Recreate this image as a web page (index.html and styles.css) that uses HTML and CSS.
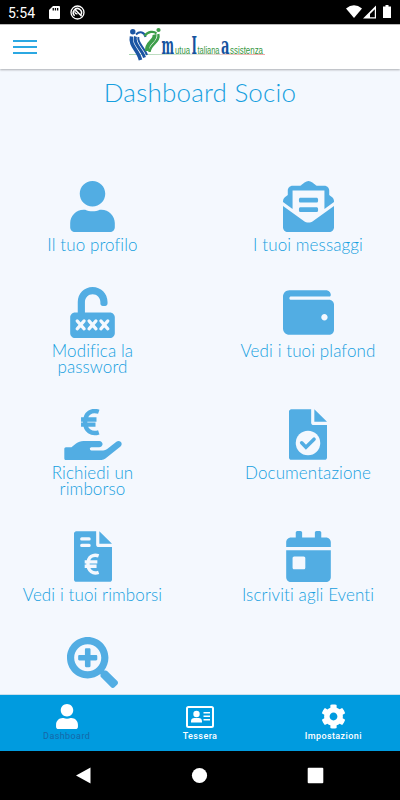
FILE: index.html
```
<!DOCTYPE html>
<html lang="it">
<head>
    <meta charset="UTF-8">
    <meta name="viewport" content="width=device-width, initial-scale=1.0">
    <title>Dashboard Socio</title>
    <link rel="stylesheet" href="styles.css">
</head>
<body>
    <div class="status-bar">
        <span class="time">5:54</span>
        <svg class="sd" width="11" height="13" viewBox="0 0 11 13"><path fill="#fff" fill-rule="evenodd" d="M4 0h6a1 1 0 0 1 1 1v11a1 1 0 0 1-1 1H1a1 1 0 0 1-1-1V4zM3.600 2v2.600h1.300V2zM5.800 2v2.600h1.300V2zM8 2v2.600h1.300V2z"/></svg>
        <svg width="15" height="15" viewBox="0 0 15 15" fill="none" stroke="#fff"><circle cx="7.500" cy="7.500" r="6.500" stroke-width="1.300"/><path d="M4.600 10.700A4.100 4.100 0 1 1 10.900 9.800M5.300 4.700l6.400 6.500" stroke-width="1.500"/><path d="M5 6.200a2 2 0 0 0 2.500 2.500" stroke-width="1.300"/></svg>
        <svg class="signals" width="46" height="14" viewBox="0 0 46 14"><path fill="#fff" d="M0 3.600Q8-3 16 3.600L8 13z"/><path fill="#fff" fill-rule="evenodd" d="M17 13.500L30 .5v13zM24 12.300h4.800V4.200L24 9z"/><path fill="#fff" d="M39.500 0h3v1.500H45V13h-8V1.500h2.500z"/></svg>
    </div>

    <header class="top-bar">
        <div class="menu"><span></span><span></span><span></span></div>
        <svg class="logo" width="160" height="42" viewBox="0 0 160 42">
            <defs>
                <linearGradient id="rule" gradientUnits="userSpaceOnUse" x1="1" y1="0" x2="137" y2="0"><stop offset="0" stop-color="#a5d3ad"/><stop offset=".45" stop-color="#dfe9df"/><stop offset="1" stop-color="#f3a5a5"/></linearGradient>
            </defs>
            <path d="M1 27.500h136" stroke="url(#rule)"/>
            <circle cx="4.800" cy="4.800" r="2.700" fill="#1b55a3"/>
            <circle cx="30.500" cy="3" r="2.100" fill="#3d9e4a"/>
            <g fill="none" stroke="#1b55a3">
                <path d="M3.500 9.500C1.500 19 10 23 12.500 33" stroke-width="3.600"/>
                <path d="M7.500 9.500C5 17 14 22 16.500 30.500" stroke-width="3"/>
                <path d="M10.500 10C8.500 15 16.500 21 19 28" stroke-width="2"/>
                <path d="M8 7.500C12 3.500 16.500 5.500 17.500 10" stroke-width="2"/>
            </g>
            <g fill="none" stroke="#3d9e4a">
                <path d="M16.500 9C20 4 26 4 28.500 6.500" stroke-width="2.200"/>
                <path d="M26.500 7.500C28 14 18 15 19 24" stroke-width="4"/>
                <path d="M30.300 7C32.500 15 22 17 21.500 25" stroke-width="2.400"/>
            </g>
            <g class="logo-big">
                <text x="33.500" y="27" textLength="12.500" lengthAdjust="spacingAndGlyphs">m</text>
                <text x="63.500" y="27" textLength="5.500" lengthAdjust="spacingAndGlyphs">I</text>
                <text x="93" y="27" textLength="8.500" lengthAdjust="spacingAndGlyphs">a</text>
            </g>
            <g class="logo-small">
                <text x="47" y="27" textLength="15" lengthAdjust="spacingAndGlyphs">utua</text>
                <text x="69.500" y="27" textLength="22" lengthAdjust="spacingAndGlyphs">taliana</text>
                <text x="102" y="27" textLength="33" lengthAdjust="spacingAndGlyphs">ssistenza</text>
            </g>
        </svg>
    </header>

    <main class="content">
        <h1>Dashboard Socio</h1>
        <div class="grid">
            <a class="item">
                <svg width="45" height="51" viewBox="0 0 448 512"><path d="M224 256c70.700 0 128-57.300 128-128S294.700 0 224 0 96 57.300 96 128s57.300 128 128 128zm89.600 32h-16.700c-22.200 10.200-46.900 16-72.900 16s-50.600-5.800-72.900-16h-16.700C60.200 288 0 348.200 0 422.400V464c0 26.500 21.500 48 48 48h352c26.500 0 48-21.500 48-48v-41.600c0-74.200-60.200-134.400-134.400-134.400z"/></svg>
                <span>Il tuo profilo</span>
            </a>
            <a class="item">
                <svg width="51" height="51" viewBox="0 0 512 512"><path d="M176 216h160c8.840 0 16-7.160 16-16v-16c0-8.840-7.160-16-16-16H176c-8.840 0-16 7.160-16 16v16c0 8.840 7.160 16 16 16zm-16 80c0 8.840 7.160 16 16 16h160c8.840 0 16-7.160 16-16v-16c0-8.840-7.160-16-16-16H176c-8.840 0-16 7.160-16 16v16zm96 121.130c-16.420 0-32.840-5.060-46.860-15.190L0 250.860V464c0 26.510 21.490 48 48 48h416c26.510 0 48-21.490 48-48V250.860L302.860 401.940c-14.020 10.120-30.440 15.190-46.860 15.190zm237.610-254.180c-8.850-6.940-17.240-13.470-29.610-22.810V96c0-26.510-21.490-48-48-48h-77.550c-3.040-2.200-5.870-4.260-9.040-6.560C312.600 29.170 279.200-.35 256 0c-23.200-.35-56.590 29.170-73.410 41.440-3.170 2.300-6 4.360-9.040 6.560H96c-26.510 0-48 21.490-48 48v44.140c-12.370 9.330-20.760 15.870-29.610 22.810A48 48 0 0 0 0 200.720v10.650l96 69.350V96h320v184.720l96-69.350v-10.650c0-14.740-6.780-28.670-18.390-37.770z"/></svg>
                <span>I tuoi messaggi</span>
            </a>
            <a class="item">
                <svg width="45" height="51" viewBox="0 0 448 512"><path d="M48 256h28V150C76 67 142 0 225 0s150 67 150 150v16c0 13-11 24-24 24h-24c-13 0-24-11-24-24v-16c0-43-35-78-78-78s-77 35-77 78v106h252c26 0 48 22 48 48v160c0 26-22 48-48 48H48c-26 0-48-22-48-48V304c0-26 22-48 48-48z"/><path class="cut" stroke-width="32" d="M70 340l70 80M140 340l-70 80M189 340l70 80M259 340l-70 80M308 340l70 80M378 340l-70 80"/></svg>
                <span>Modifica la<br>password</span>
            </a>
            <a class="item">
                <svg width="51" height="51" viewBox="0 0 512 512"><path d="M461.200 128H80c-8.840 0-16-7.160-16-16s7.160-16 16-16h384c8.840 0 16-7.160 16-16 0-26.510-21.490-48-48-48H64C28.650 32 0 60.650 0 96v320c0 35.350 28.650 64 64 64h397.200c28.020 0 50.800-21.530 50.800-48V176c0-26.470-22.780-48-50.800-48zM416 336c-17.670 0-32-14.330-32-32s14.330-32 32-32 32 14.330 32 32-14.330 32-32 32z"/></svg>
                <span>Vedi i tuoi plafond</span>
            </a>
            <a class="item">
                <svg width="58" height="51" viewBox="0 0 576 512"><path class="line" stroke-width="44" d="M346 28C275 4 209 40 209 130s66 128 137 104M168 105h155M168 157h145"/><path d="M565.300 328.100c-11.800-10.700-30.200-10-42.600 0L430.300 402c-11.300 9.100-25.400 14-40 14H272c-8.800 0-16-7.200-16-16s7.200-16 16-16h78.300c15.900 0 30.700-10.900 33.300-26.600 3.300-20-12.100-37.400-31.600-37.400H192c-27 0-53.100 9.300-74.100 26.300L71.400 384H16c-8.800 0-16 7.200-16 16v96c0 8.800 7.200 16 16 16h356.800c14.500 0 28.600-4.900 40-14L564 377c15.200-12.100 16.400-35.300 1.300-48.900z"/></svg>
                <span>Richiedi un<br>rimborso</span>
            </a>
            <a class="item">
                <svg width="38" height="51" viewBox="0 0 384 512"><path d="M224 136V0H24C10.700 0 0 10.700 0 24v464c0 13.300 10.700 24 24 24h336c13.300 0 24-10.700 24-24V160H248c-13.200 0-24-10.800-24-24zM256 0v128h128z"/><circle class="hole" cx="192" cy="342" r="124"/><path class="line" stroke-width="36" stroke-linecap="round" d="M128 340l43 44 82-80"/></svg>
                <span>Documentazione</span>
            </a>
            <a class="item">
                <svg width="38" height="51" viewBox="0 0 384 512"><path d="M224 136V0H24C10.700 0 0 10.700 0 24v464c0 13.300 10.700 24 24 24h336c13.300 0 24-10.700 24-24V160H248c-13.200 0-24-10.800-24-24zM256 0v128h128z"/><path class="cut" stroke-width="32" d="M78 78h75M78 144h75"/><path class="cut butt" stroke-width="34" d="M249 250C194 229 141 259 141 333s53 103 108 83M108 310h128M108 354h120"/></svg>
                <span>Vedi i tuoi rimborsi</span>
            </a>
            <a class="item">
                <svg width="45" height="51" viewBox="0 0 448 512"><path d="M0 464c0 26.500 21.500 48 48 48h352c26.500 0 48-21.500 48-48V192H0v272zm64-192c0-8.800 7.200-16 16-16h96c8.800 0 16 7.200 16 16v96c0 8.800-7.200 16-16 16H80c-8.800 0-16-7.200-16-16v-96zM400 64h-48V16c0-8.800-7.200-16-16-16h-32c-8.800 0-16 7.200-16 16v48H160V16c0-8.800-7.200-16-16-16h-32c-8.800 0-16 7.200-16 16v48H48C21.500 64 0 85.500 0 112v48h448v-48c0-26.500-21.500-48-48-48z"/></svg>
                <span>Iscriviti agli Eventi</span>
            </a>
            <a class="item">
                <svg width="51" height="51" viewBox="0 0 512 512"><path d="M304 192v32c0 6.600-5.400 12-12 12h-56v56c0 6.600-5.400 12-12 12h-32c-6.600 0-12-5.400-12-12v-56h-56c-6.600 0-12-5.400-12-12v-32c0-6.600 5.400-12 12-12h56v-56c0-6.600 5.400-12 12-12h32c6.600 0 12 5.400 12 12v56h56c6.600 0 12 5.400 12 12zm201 284.700L476.700 505c-9.400 9.400-24.600 9.400-33.900 0L343 405.300c-4.500-4.500-7-10.600-7-17V372c-35.300 27.600-79.700 44-128 44C93.100 416 0 322.900 0 208S93.100 0 208 0s208 93.100 208 208c0 48.300-16.400 92.700-44 128h16.300c6.400 0 12.500 2.500 17 7l99.700 99.700c9.300 9.400 9.300 24.600 0 34zM344 208c0-75.200-60.800-136-136-136S72 132.800 72 208s60.800 136 136 136 136-60.800 136-136z"/></svg>
            </a>
        </div>
    </main>

    <nav class="tab-bar">
        <a class="tab active">
            <svg width="22" height="25" viewBox="0 0 448 512"><path d="M224 256c70.700 0 128-57.300 128-128S294.700 0 224 0 96 57.300 96 128s57.300 128 128 128zm89.600 32h-16.700c-22.200 10.200-46.900 16-72.900 16s-50.600-5.800-72.900-16h-16.700C60.200 288 0 348.200 0 422.400V464c0 26.500 21.500 48 48 48h352c26.500 0 48-21.500 48-48v-41.600c0-74.200-60.200-134.400-134.400-134.400z"/></svg>
            <span>Dashboard</span>
        </a>
        <a class="tab">
            <svg width="28" height="25" viewBox="0 0 28 25"><rect x="1" y="3" width="26" height="20" rx="1.500" fill="none" stroke="#fff" stroke-width="2"/><circle cx="10.500" cy="10" r="3.200"/><path d="M5 18.500v-1.200c0-2 1.500-3.200 3.300-3.200h4.400c1.800 0 3.300 1.200 3.300 3.200v1.200zM17.500 8H24v1.500h-6.500zM17.500 11.500H24V13h-6.500zM17.500 15H24v1.500h-6.500z"/></svg>
            <span>Tessera</span>
        </a>
        <a class="tab">
            <svg width="25" height="25" viewBox="0 0 512 512"><path d="M487.400 315.700l-42.600-24.600c4.300-23.200 4.300-47 0-70.200l42.600-24.600c4.900-2.800 7.100-8.600 5.500-14-11.100-35.600-30-67.800-54.700-94.600-3.800-4.100-10-5.100-14.800-2.300L380.800 110c-17.900-15.400-38.500-27.300-60.800-35.100V25.800c0-5.600-3.900-10.500-9.400-11.700-36.700-8.200-74.300-7.800-109.200 0-5.500 1.200-9.400 6.100-9.400 11.700V75c-22.200 7.900-42.800 19.800-60.800 35.100L88.700 85.500c-4.900-2.800-11-1.900-14.800 2.300-24.700 26.700-43.600 58.900-54.700 94.600-1.700 5.400.6 11.200 5.500 14L67.300 221c-4.300 23.200-4.300 47 0 70.200l-42.600 24.600c-4.900 2.800-7.100 8.600-5.500 14 11.100 35.600 30 67.800 54.700 94.600 3.800 4.100 10 5.100 14.800 2.300l42.600-24.600c17.900 15.400 38.500 27.300 60.800 35.100v49.200c0 5.600 3.900 10.500 9.400 11.700 36.700 8.200 74.300 7.800 109.200 0 5.500-1.200 9.400-6.100 9.400-11.700v-49.200c22.200-7.900 42.800-19.800 60.800-35.100l42.600 24.600c4.900 2.800 11 1.900 14.800-2.300 24.700-26.700 43.600-58.900 54.700-94.600 1.500-5.500-.7-11.300-5.600-14.100zM256 336c-44.100 0-80-35.900-80-80s35.900-80 80-80 80 35.900 80 80-35.900 80-80 80z"/></svg>
            <span>Impostazioni</span>
        </a>
    </nav>

    <div class="system-nav">
        <svg width="17" height="17" viewBox="0 0 17 17"><path fill="#fff" d="M15.500.5v16L1 8.500z"/></svg>
        <svg width="17" height="17" viewBox="0 0 17 17"><circle cx="8.500" cy="8.500" r="7.600" fill="#fff"/></svg>
        <svg width="17" height="17" viewBox="0 0 17 17"><rect x=".7" y=".7" width="15.600" height="15.600" rx="1" fill="#fff"/></svg>
    </div>
</body>
</html>
```

FILE: styles.css
```
* {
    box-sizing: border-box;
}
body {
    margin: 0;
    width: 400px;
    height: 800px;
    overflow: hidden;
    display: flex;
    flex-direction: column;
    font-family: Lato, "Open Sans", sans-serif;
    background-color: #f4f8fe;
}
svg {
    display: block;
    flex: none;
}
.status-bar {
    height: 24px;
    flex: none;
    background-color: #000;
    color: #fff;
    display: flex;
    align-items: center;
    padding: 0 8px;
}
.time {
    font: 14px/24px Roboto, sans-serif;
    width: 41px;
    padding-top: 2px;
}
.sd {
    margin-right: 10px;
}
.signals {
    margin-left: auto;
}
.top-bar {
    height: 45px;
    flex: none;
    display: flex;
    align-items: flex-start;
    background-color: #fff;
    border-top: 1px solid #b9b9b9;
    box-shadow: 0 1px 2px rgba(0, 0, 0, 0.3);
    z-index: 1;
}
.menu {
    width: 24px;
    margin: 15px 91px 0 13px;
    display: flex;
    flex-direction: column;
    gap: 4px;
}
.menu span {
    height: 2px;
    background-color: #2ba8e2;
}
.logo {
    margin-top: 2px;
    overflow: visible;
}
.logo-big {
    font: bold 24px "DejaVu Serif", serif;
    fill: #1553a0;
}
.logo-small {
    font: 10.500px "Liberation Sans", sans-serif;
    fill: #35953d;
}
.content {
    flex: 1;
    min-height: 0;
    overflow: hidden;
}
h1 {
    margin: 7px 0 0;
    font-size: 26px;
    line-height: 32px;
    font-weight: 300;
    text-align: center;
    color: #169fdf;
    letter-spacing: 0.2px;
}
.grid {
    display: grid;
    grid-template-columns: 145px 145px;
    justify-content: space-between;
    row-gap: 34px;
    padding: 73px 19.500px 0 20px;
}
.item {
    display: flex;
    flex-direction: column;
    align-items: center;
    gap: 5px;
    font-size: 17px;
    line-height: 16px;
    font-weight: 300;
    text-align: center;
    white-space: nowrap;
    color: #169fdf;
    letter-spacing: 0.1px;
}
.item svg {
    fill: #52ade3;
}
.item .cut {
    fill: none;
    stroke: #f4f8fe;
    stroke-linecap: round;
}
.item .butt {
    stroke-linecap: butt;
}
.item .line {
    fill: none;
    stroke: #52ade3;
}
.item .hole {
    fill: #f4f8fe;
}
.tab-bar {
    height: 57px;
    flex: none;
    display: flex;
    background-color: #009bdf;
    border-top: 1px solid #c9dfec;
}
.tab {
    flex: 1;
    display: flex;
    flex-direction: column;
    align-items: center;
    padding-top: 9px;
    font: 500 9px/14px Roboto, sans-serif;
    letter-spacing: 0.4px;
    color: #fff;
}
.tab svg {
    fill: #fff;
}
.active {
    color: #1767a8;
    font-weight: 400;
}
.system-nav {
    height: 49px;
    flex: none;
    display: flex;
    justify-content: space-between;
    align-items: center;
    padding: 0 76.500px 0 75px;
    background-color: #000;
}
```
